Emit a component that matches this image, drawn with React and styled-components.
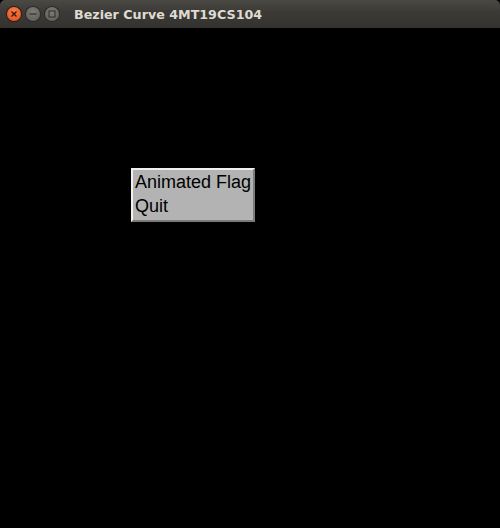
import styled, { createGlobalStyle } from 'styled-components';

const Global = createGlobalStyle`
  html, body {
    margin: 0;
    padding: 0;
    background: #000;
  }
`;

const Window = styled.div`
  width: 500px;
  height: 528px;
  display: flex;
  flex-direction: column;
  background: #000;
  overflow: hidden;
`;

const TitleBar = styled.div`
  height: 28px;
  flex: 0 0 28px;
  display: flex;
  align-items: center;
  padding-left: 7px;
  background: linear-gradient(#4a4944, #3c3b37 40%, #33322e);
  border-radius: 5px 5px 0 0;
  box-sizing: border-box;
`;

const Buttons = styled.div`
  display: flex;
  gap: 5px;
  margin-right: 15px;
`;

const WinButton = styled.div`
  width: 14px;
  height: 14px;
  border-radius: 50%;
  display: flex;
  align-items: center;
  justify-content: center;
  background: ${p => (p.close ? 'radial-gradient(circle at 50% 35%, #f7834f, #df4a16)' : 'radial-gradient(circle at 50% 35%, #7c7b76, #5b5a55)')};
  box-shadow: 0 0 0 1px ${p => (p.close ? '#3a1a0c' : '#2c2b28')};
`;

const Title = styled.span`
  font-family: 'DejaVu Sans', sans-serif;
  font-weight: bold;
  font-size: 12.7px;
  color: #dfdbd2;
`;

const Canvas = styled.div`
  flex: 1;
  background: #000;
  padding: 140px 0 0 131px;
`;

const Menu = styled.div`
  width: 124px;
  height: 54px;
  box-sizing: border-box;
  background: #b3b3b3;
  border-style: solid;
  border-width: 2px;
  border-color: #f0f0f0 #7a7a7a #7a7a7a #f0f0f0;
  display: flex;
  flex-direction: column;
  padding: 0 0 0 2px;
`;

const Item = styled.div`
  font-family: 'Liberation Sans', Arial, sans-serif;
  font-size: 18px;
  line-height: 24px;
  height: 24px;
  color: #000;
  white-space: nowrap;
`;

export default function App() {
  return (
    <>
      <Global />
      <Window>
        <TitleBar>
          <Buttons>
            <WinButton close>
              <svg width="8" height="8" viewBox="0 0 8 8">
                <path d="M1.5 1.5 L6.5 6.5 M6.5 1.5 L1.5 6.5" stroke="#3a1208" strokeWidth="1.4" />
              </svg>
            </WinButton>
            <WinButton>
              <svg width="8" height="8" viewBox="0 0 8 8">
                <path d="M0.5 4 H7.5" stroke="#3a3935" strokeWidth="1.4" />
              </svg>
            </WinButton>
            <WinButton>
              <svg width="8" height="8" viewBox="0 0 8 8">
                <rect x="1" y="1" width="6" height="6" fill="none" stroke="#3a3935" strokeWidth="1.2" />
              </svg>
            </WinButton>
          </Buttons>
          <Title>Bezier Curve 4MT19CS104</Title>
        </TitleBar>
        <Canvas>
          <Menu>
            <Item>Animated Flag</Item>
            <Item>Quit</Item>
          </Menu>
        </Canvas>
      </Window>
    </>
  );
}
